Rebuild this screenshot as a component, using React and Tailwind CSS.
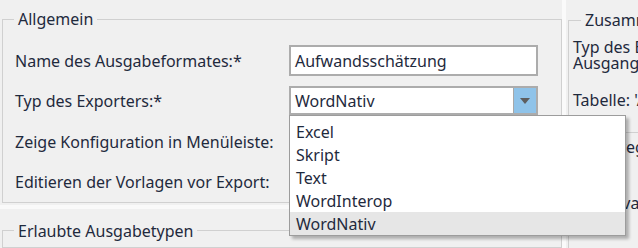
import React from 'react';

const font = { fontFamily: '"Noto Sans", "Liberation Sans", sans-serif' };

const items = ['Excel', 'Skript', 'Text', 'WordInterop', 'WordNativ'];

const Row = ({ label, className, children }) => (
  <div className={`flex items-center ${className}`}>
    <div className="w-[286px] shrink-0 pl-[12px] whitespace-nowrap">{label}</div>
    {children}
  </div>
);

const Combo = () => (
  <div className="relative w-[249px] h-[29px]">
    <div className="flex h-full border-2 border-[#acacac] bg-white">
      <div className="flex-1 pl-[4px] flex items-center">WordNativ</div>
      <div className="w-[23px] border-l border-[#a8a8a8] bg-[#8fc3e9] flex items-center justify-center">
        <svg width="10" height="6" viewBox="0 0 10 6">
          <path d="M0 0 L10 0 L5 6 Z" fill="#5e5e5e" />
        </svg>
      </div>
    </div>
    <div className="absolute left-0 top-[29px] z-10 w-[337px] border border-[#9c9c9c] bg-white pt-[4px] shadow-[3px_3px_3px_rgba(0,0,0,0.28)]">
      {items.map(item => (
        <div
          key={item}
          className={`h-[23px] pl-[6px] flex items-center ${item === 'WordNativ' ? 'bg-[#e6e6e6]' : ''}`}
        >
          {item}
        </div>
      ))}
    </div>
  </div>
);

export default function App() {
  return (
    <div
      className="flex w-[638px] h-[248px] overflow-hidden bg-[#f0f0f0] text-[16px] leading-[20px] text-[#1f2a3d]"
      style={font}
    >
      <div className="w-[562px] shrink-0 flex flex-col">
        <fieldset className="mt-[9px] ml-[2px] w-[560px] min-w-0 border border-[#d0d0d0] pt-[16px] pb-[5px]">
          <legend className="ml-[11px] px-[4px] leading-[20px]">Allgemein</legend>
          <Row label="Name des Ausgabeformates:*" className="h-[31px]">
            <div className="w-[249px] h-[31px] border-2 border-[#acacac] bg-white pl-[4px] flex items-center">
              Aufwandsschätzung
            </div>
          </Row>
          <Row label="Typ des Exporters:*" className="mt-[10px] h-[29px] relative z-10">
            <Combo />
          </Row>
          <Row label="Zeige Konfiguration in Menüleiste:" className="mt-[12px] h-[30px]" />
          <Row label="Editieren der Vorlagen vor Export:" className="mt-[10px] h-[30px]" />
        </fieldset>
        <div className="mt-[2px] h-[8px] bg-[#f9f9f9]" />
        <fieldset className="mt-[12px] ml-[2px] w-[560px] min-w-0 h-[60px] border border-[#d0d0d0]">
          <legend className="ml-[11px] px-[4px] leading-[20px]">Erlaubte Ausgabetypen</legend>
        </fieldset>
      </div>
      <div className="w-[4px] shrink-0 bg-[#fafafa]" />
      <div className="flex-1 min-w-0 overflow-hidden flex flex-col">
        <fieldset className="mt-[10px] ml-[2px] w-[120px] min-w-0 h-[122px] border border-b-0 border-[#d0d0d0] shrink-0">
          <legend className="ml-[12px] px-[4px] leading-[20px] whitespace-nowrap">Zusammenfassung</legend>
          <div className="pt-[9px] pl-[4px] leading-[16px] whitespace-nowrap">
            <div>Typ des Exporters: WordNativ</div>
            <div>Ausgangsformat: Word</div>
            <div className="mt-[21px]">Tabelle: 'Aufwand'</div>
          </div>
        </fieldset>
        <div className="ml-[2px] w-[120px] flex-1 border-t border-l border-[#d0d0d0] pl-[4px] pt-[6px] leading-[16px] whitespace-nowrap">
          <div>Seitenregel</div>
          <div className="mt-[40px]">Exportvariante</div>
        </div>
      </div>
    </div>
  );
}
